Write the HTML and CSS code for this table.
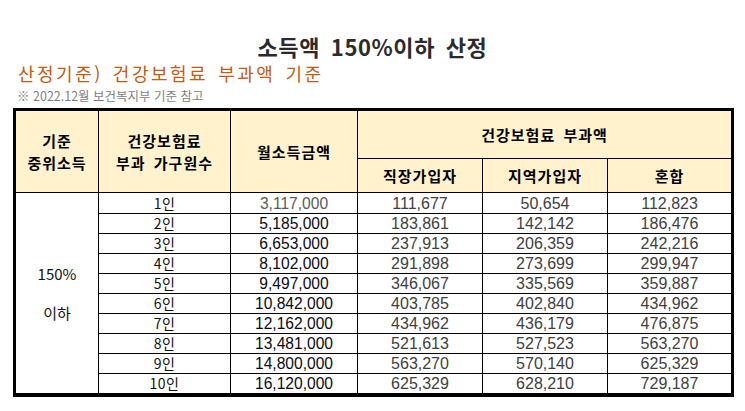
FILE: index.html
```html
<!DOCTYPE html>
<html lang="ko">
<head>
<meta charset="utf-8">
<title>소득액 150%이하 산정</title>
<link rel="stylesheet" href="styles.css">
</head>
<body>
<div class="page">
  <h1 class="title">소득액 150%이하 산정</h1>
  <h2 class="subtitle">산정기준) 건강보험료 부과액 기준</h2>
  <p class="note">※ 2022.12월 보건복지부 기준 참고</p>
  <table class="grid">
    <colgroup>
      <col class="c1"><col class="c2"><col class="c3"><col class="c4"><col class="c5"><col class="c6">
    </colgroup>
    <thead>
      <tr class="h1">
        <th rowspan="2">기준<br>중위소득</th>
        <th rowspan="2">건강보험료<br>부과 가구원수</th>
        <th rowspan="2">월소득금액</th>
        <th colspan="3" class="last">건강보험료 부과액</th>
      </tr>
      <tr class="h2">
        <th>직장가입자</th>
        <th>지역가입자</th>
        <th class="last">혼합</th>
      </tr>
    </thead>
    <tbody>
      <tr class="first">
        <td rowspan="10" class="group"><div class="grp"><span>150%</span><span>이하</span></div></td>
        <td class="n">1인</td><td class="m muted">3,117,000</td><td class="v">111,677</td><td class="v">50,654</td><td class="v last">112,823</td>
      </tr>
      <tr><td class="n">2인</td><td class="m">5,185,000</td><td class="v">183,861</td><td class="v">142,142</td><td class="v last">186,476</td></tr>
      <tr><td class="n">3인</td><td class="m">6,653,000</td><td class="v">237,913</td><td class="v">206,359</td><td class="v last">242,216</td></tr>
      <tr><td class="n">4인</td><td class="m">8,102,000</td><td class="v">291,898</td><td class="v">273,699</td><td class="v last">299,947</td></tr>
      <tr><td class="n">5인</td><td class="m">9,497,000</td><td class="v">346,067</td><td class="v">335,569</td><td class="v last">359,887</td></tr>
      <tr><td class="n">6인</td><td class="m">10,842,000</td><td class="v">403,785</td><td class="v">402,840</td><td class="v last">434,962</td></tr>
      <tr><td class="n">7인</td><td class="m">12,162,000</td><td class="v">434,962</td><td class="v">436,179</td><td class="v last">476,875</td></tr>
      <tr><td class="n">8인</td><td class="m">13,481,000</td><td class="v">521,613</td><td class="v">527,523</td><td class="v last">563,270</td></tr>
      <tr><td class="n">9인</td><td class="m">14,800,000</td><td class="v">563,270</td><td class="v">570,140</td><td class="v last">625,329</td></tr>
      <tr class="final"><td class="n">10인</td><td class="m">16,120,000</td><td class="v">625,329</td><td class="v">628,210</td><td class="v last">729,187</td></tr>
    </tbody>
  </table>
</div>
</body>
</html>
```

FILE: styles.css
```css
html, body {
  margin: 0;
  padding: 0;
  background: #ffffff;
}

body {
  font-family: "Noto Sans CJK KR", "Noto Sans", sans-serif;
  color: #000;
}

.page {
  width: 745px;
  padding-top: 30px;
}

.title {
  margin: 0;
  height: 32px;
  font-size: 22px;
  line-height: 32px;
  font-weight: bold;
  color: #2b2b2b;
  text-align: center;
  word-spacing: 4px;
  letter-spacing: 0.6px;
}

.subtitle {
  margin: 0 0 0 18px;
  height: 24px;
  font-size: 18px;
  line-height: 23px;
  font-weight: normal;
  color: #c55a11;
  word-spacing: 2.5px;
  letter-spacing: 2.5px;
}

.note {
  margin: 0 0 0 17px;
  height: 22px;
  font-size: 12.5px;
  line-height: 20px;
  color: #7f7f7f;
}

.grid {
  margin-left: 13px;
  width: 721px;
  table-layout: fixed;
  border-collapse: separate;
  border-spacing: 0;
  border: 3px solid #000;
  border-bottom-width: 4px;
}

.c1 { width: 83px; }
.c2 { width: 132px; }
.c3 { width: 127px; }
.c4 { width: 125px; }
.c5 { width: 125px; }
.c6 { width: 123px; }

.grid th,
.grid td {
  padding: 0;
  border-right: 1px solid #000;
  border-bottom: 1px solid #000;
  text-align: center;
  vertical-align: middle;
}

.grid .last {
  border-right: none;
}

.grid th {
  background: #fff2cc;
  font-size: 15px;
  font-weight: bold;
  line-height: 22px;
  letter-spacing: 1px;
  word-spacing: 3px;
  color: #000;
}

.h1 th {
  height: 47px;
}

.h2 th {
  height: 33px;
}

.grid td {
  height: 19px;
  line-height: 19px;
  font-size: 16px;
}

.grid tr.first td.n,
.grid tr.first td.m,
.grid tr.first td.v {
  height: 20px;
}

.grid tr.final td {
  border-bottom: none;
}

.grid td.group {
  border-bottom: none;
}

.grp {
  display: flex;
  flex-direction: column;
  align-items: center;
  gap: 18px;
  font-size: 15px;
  line-height: 21px;
  color: #111;
}

.grid td.n {
  font-size: 14px;
  letter-spacing: 0.5px;
  color: #111;
}

.m {
  font-family: "Liberation Sans", Arial, sans-serif;
  color: #0a0a14;
}

.grid td.m {
  font-size: 15.6px;
}

.m.muted {
  color: #5a5a5a;
}

.v {
  font-family: "Liberation Sans", Arial, sans-serif;
  color: #404040;
}
```
